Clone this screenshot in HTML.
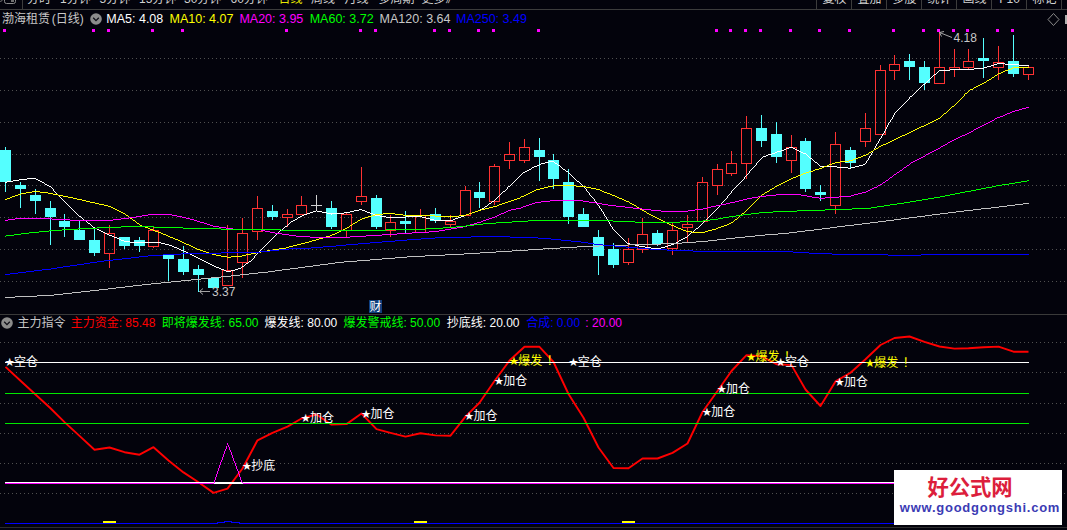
<!DOCTYPE html>
<html lang="zh"><head><meta charset="utf-8"><title>渤海租赁 (日线)</title>
<style>
html,body{margin:0;padding:0;background:#03030c;}
body{width:1067px;height:530px;overflow:hidden;position:relative;font-family:"Liberation Sans","Noto Sans CJK SC",sans-serif;}
svg{position:absolute;left:0;top:0;display:block}
text{font-family:"Liberation Sans","Noto Sans CJK SC",sans-serif;font-size:12px;}
.t{position:absolute;white-space:nowrap;font-size:12px;line-height:14px;color:#c8c8c8;font-weight:400}
.st{font-family:"DejaVu Sans",sans-serif;font-weight:400}
</style></head><body>
<svg width="1067" height="530" viewBox="0 0 1067 530">
<rect width="1067" height="530" fill="#03030c"/>
<g stroke="#505050" stroke-width="1" stroke-dasharray="1 3" shape-rendering="crispEdges">
<line x1="0" y1="58.5" x2="1067" y2="58.5"/>
<line x1="0" y1="90.5" x2="1067" y2="90.5"/>
<line x1="0" y1="122.5" x2="1067" y2="122.5"/>
<line x1="0" y1="154.5" x2="1067" y2="154.5"/>
<line x1="0" y1="185.5" x2="1067" y2="185.5"/>
<line x1="0" y1="217.5" x2="1067" y2="217.5"/>
<line x1="0" y1="249.5" x2="1067" y2="249.5"/>
<line x1="0" y1="281.5" x2="1067" y2="281.5"/>
<line x1="0" y1="342.5" x2="1067" y2="342.5"/>
<line x1="0" y1="372.5" x2="1067" y2="372.5"/>
<line x1="0" y1="403.5" x2="1067" y2="403.5"/>
<line x1="0" y1="433.5" x2="1067" y2="433.5"/>
<line x1="0" y1="463.5" x2="1067" y2="463.5"/>
<line x1="0" y1="493.5" x2="1067" y2="493.5"/>
</g>
<g shape-rendering="crispEdges">
<rect x="0" y="9" width="1067" height="1" fill="#3c3c3c"/>
<rect x="22" y="0" width="1" height="9" fill="#3c3c3c"/>
<rect x="816" y="0" width="1" height="9" fill="#3c3c3c"/>
<rect x="851" y="0" width="1" height="9" fill="#3c3c3c"/>
<rect x="886" y="0" width="1" height="9" fill="#3c3c3c"/>
<rect x="921" y="0" width="1" height="9" fill="#3c3c3c"/>
<rect x="956" y="0" width="1" height="9" fill="#3c3c3c"/>
<rect x="991" y="0" width="1" height="9" fill="#3c3c3c"/>
<rect x="1026" y="0" width="1" height="9" fill="#3c3c3c"/>
<rect x="1061" y="0" width="1" height="9" fill="#3c3c3c"/>
<rect x="0" y="314" width="1067" height="1" fill="#3a3a3a"/>
<rect x="0" y="527" width="1067" height="1" fill="#2c2c2e"/>
<rect x="1065" y="15" width="2" height="9" fill="#b0b0b0"/>
<rect x="3" y="29" width="3" height="3" fill="#ff00ff"/>
<rect x="92" y="29" width="3" height="3" fill="#ff00ff"/>
<rect x="107" y="29" width="3" height="3" fill="#ff00ff"/>
<rect x="151" y="29" width="3" height="3" fill="#ff00ff"/>
<rect x="181" y="29" width="3" height="3" fill="#ff00ff"/>
<rect x="285" y="29" width="3" height="3" fill="#ff00ff"/>
<rect x="359" y="29" width="3" height="3" fill="#ff00ff"/>
<rect x="374" y="29" width="3" height="3" fill="#ff00ff"/>
<rect x="433" y="29" width="3" height="3" fill="#ff00ff"/>
<rect x="448" y="29" width="3" height="3" fill="#ff00ff"/>
<rect x="477" y="29" width="3" height="3" fill="#ff00ff"/>
<rect x="492" y="29" width="3" height="3" fill="#ff00ff"/>
<rect x="537" y="29" width="3" height="3" fill="#ff00ff"/>
<rect x="715" y="29" width="3" height="3" fill="#ff00ff"/>
<rect x="729" y="29" width="3" height="3" fill="#ff00ff"/>
<rect x="744" y="29" width="3" height="3" fill="#ff00ff"/>
<rect x="759" y="29" width="3" height="3" fill="#ff00ff"/>
<rect x="789" y="29" width="3" height="3" fill="#ff00ff"/>
<rect x="818" y="29" width="3" height="3" fill="#ff00ff"/>
<rect x="848" y="29" width="3" height="3" fill="#ff00ff"/>
<rect x="892" y="29" width="3" height="3" fill="#ff00ff"/>
<rect x="922" y="29" width="3" height="3" fill="#ff00ff"/>
<rect x="937" y="29" width="3" height="3" fill="#ff00ff"/>
<rect x="952" y="29" width="3" height="3" fill="#ff00ff"/>
<rect x="966" y="29" width="3" height="3" fill="#ff00ff"/>
<rect x="996" y="29" width="3" height="3" fill="#ff00ff"/>
<rect x="1011" y="29" width="3" height="3" fill="#ff00ff"/>
</g>
<path d="M1053.5 13.5 L1059 19.5 L1053.5 25.5 L1048 19.5 Z" fill="none" stroke="#8a8a8a" stroke-width="1"/>
<g shape-rendering="crispEdges">
<rect x="5" y="147" width="1" height="45" fill="#54ffff"/>
<rect x="0" y="150" width="11" height="32" fill="#54ffff"/>
<rect x="20" y="182" width="1" height="26" fill="#54ffff"/>
<rect x="15" y="185" width="11" height="4" fill="#54ffff"/>
<rect x="35" y="189" width="1" height="25" fill="#54ffff"/>
<rect x="30" y="195" width="11" height="6" fill="#54ffff"/>
<rect x="50" y="201" width="1" height="44" fill="#54ffff"/>
<rect x="45" y="208" width="11" height="9" fill="#54ffff"/>
<rect x="64" y="214" width="1" height="23" fill="#54ffff"/>
<rect x="59" y="221" width="11" height="6" fill="#54ffff"/>
<rect x="79" y="221" width="1" height="19" fill="#54ffff"/>
<rect x="74" y="230" width="11" height="10" fill="#54ffff"/>
<rect x="94" y="227" width="1" height="29" fill="#54ffff"/>
<rect x="89" y="240" width="11" height="13" fill="#54ffff"/>
<rect x="109" y="225" width="1" height="8" fill="#ff3232"/>
<rect x="109" y="254" width="1" height="14" fill="#ff3232"/>
<rect x="104.5" y="233.5" width="10" height="20" fill="none" stroke="#ff3232" stroke-width="1"/>
<rect x="124" y="237" width="1" height="12" fill="#54ffff"/>
<rect x="119" y="237" width="11" height="9" fill="#54ffff"/>
<rect x="139" y="237" width="1" height="15" fill="#54ffff"/>
<rect x="134" y="240" width="11" height="6" fill="#54ffff"/>
<rect x="153" y="227" width="1" height="3" fill="#ff3232"/>
<rect x="153" y="247" width="1" height="1" fill="#ff3232"/>
<rect x="148.5" y="230.5" width="10" height="16" fill="none" stroke="#ff3232" stroke-width="1"/>
<rect x="168" y="254" width="1" height="27" fill="#54ffff"/>
<rect x="163" y="254" width="11" height="5" fill="#54ffff"/>
<rect x="183" y="246" width="1" height="29" fill="#54ffff"/>
<rect x="178" y="259" width="11" height="13" fill="#54ffff"/>
<rect x="198" y="265" width="1" height="27" fill="#54ffff"/>
<rect x="193" y="269" width="11" height="6" fill="#54ffff"/>
<rect x="213" y="278" width="1" height="10" fill="#54ffff"/>
<rect x="208" y="278" width="11" height="10" fill="#54ffff"/>
<rect x="227" y="225" width="1" height="45" fill="#ff3232"/>
<rect x="222.5" y="270.5" width="10" height="15" fill="none" stroke="#ff3232" stroke-width="1"/>
<rect x="242" y="218" width="1" height="15" fill="#ff3232"/>
<rect x="242" y="263" width="1" height="15" fill="#ff3232"/>
<rect x="237.5" y="233.5" width="10" height="29" fill="none" stroke="#ff3232" stroke-width="1"/>
<rect x="257" y="196" width="1" height="12" fill="#ff3232"/>
<rect x="257" y="232" width="1" height="8" fill="#ff3232"/>
<rect x="252.5" y="208.5" width="10" height="23" fill="none" stroke="#ff3232" stroke-width="1"/>
<rect x="272" y="205" width="1" height="15" fill="#54ffff"/>
<rect x="267" y="211" width="11" height="6" fill="#54ffff"/>
<rect x="287" y="209" width="1" height="5" fill="#ff3232"/>
<rect x="287" y="218" width="1" height="9" fill="#ff3232"/>
<rect x="282.5" y="214.5" width="10" height="3" fill="none" stroke="#ff3232" stroke-width="1"/>
<rect x="301" y="196" width="1" height="9" fill="#ff3232"/>
<rect x="296.5" y="205.5" width="10" height="9" fill="none" stroke="#ff3232" stroke-width="1"/>
<rect x="316" y="195" width="1" height="15" fill="#d0d0d0"/>
<rect x="311" y="205" width="11" height="1" fill="#d0d0d0"/>
<rect x="331" y="201" width="1" height="28" fill="#54ffff"/>
<rect x="326" y="208" width="11" height="19" fill="#54ffff"/>
<rect x="346" y="213" width="1" height="1" fill="#ff3232"/>
<rect x="346" y="231" width="1" height="6" fill="#ff3232"/>
<rect x="341.5" y="214.5" width="10" height="16" fill="none" stroke="#ff3232" stroke-width="1"/>
<rect x="361" y="167" width="1" height="29" fill="#ff3232"/>
<rect x="361" y="202" width="1" height="3" fill="#ff3232"/>
<rect x="356.5" y="196.5" width="10" height="5" fill="none" stroke="#ff3232" stroke-width="1"/>
<rect x="376" y="195" width="1" height="34" fill="#54ffff"/>
<rect x="371" y="198" width="11" height="29" fill="#54ffff"/>
<rect x="390" y="215" width="1" height="7" fill="#ff3232"/>
<rect x="390" y="231" width="1" height="6" fill="#ff3232"/>
<rect x="385.5" y="222.5" width="10" height="8" fill="none" stroke="#ff3232" stroke-width="1"/>
<rect x="405" y="211" width="1" height="22" fill="#54ffff"/>
<rect x="400" y="221" width="11" height="3" fill="#54ffff"/>
<rect x="420" y="209" width="1" height="6" fill="#ff3232"/>
<rect x="415.5" y="215.5" width="10" height="17" fill="none" stroke="#ff3232" stroke-width="1"/>
<rect x="435" y="208" width="1" height="15" fill="#54ffff"/>
<rect x="430" y="214" width="11" height="7" fill="#54ffff"/>
<rect x="450" y="215" width="1" height="6" fill="#ff3232"/>
<rect x="450" y="225" width="1" height="2" fill="#ff3232"/>
<rect x="445.5" y="221.5" width="10" height="3" fill="none" stroke="#ff3232" stroke-width="1"/>
<rect x="465" y="186" width="1" height="4" fill="#ff3232"/>
<rect x="460.5" y="190.5" width="10" height="25" fill="none" stroke="#ff3232" stroke-width="1"/>
<rect x="479" y="182" width="1" height="26" fill="#54ffff"/>
<rect x="474" y="192" width="11" height="6" fill="#54ffff"/>
<rect x="494" y="164" width="1" height="2" fill="#ff3232"/>
<rect x="494" y="202" width="1" height="3" fill="#ff3232"/>
<rect x="489.5" y="166.5" width="10" height="35" fill="none" stroke="#ff3232" stroke-width="1"/>
<rect x="509" y="142" width="1" height="12" fill="#ff3232"/>
<rect x="509" y="161" width="1" height="8" fill="#ff3232"/>
<rect x="504.5" y="154.5" width="10" height="6" fill="none" stroke="#ff3232" stroke-width="1"/>
<rect x="524" y="139" width="1" height="8" fill="#ff3232"/>
<rect x="524" y="161" width="1" height="2" fill="#ff3232"/>
<rect x="519.5" y="147.5" width="10" height="13" fill="none" stroke="#ff3232" stroke-width="1"/>
<rect x="539" y="138" width="1" height="43" fill="#54ffff"/>
<rect x="534" y="150" width="11" height="7" fill="#54ffff"/>
<rect x="553" y="154" width="1" height="35" fill="#54ffff"/>
<rect x="548" y="160" width="11" height="19" fill="#54ffff"/>
<rect x="568" y="169" width="1" height="55" fill="#54ffff"/>
<rect x="563" y="182" width="11" height="35" fill="#54ffff"/>
<rect x="583" y="208" width="1" height="19" fill="#54ffff"/>
<rect x="578" y="214" width="11" height="13" fill="#54ffff"/>
<rect x="598" y="230" width="1" height="45" fill="#54ffff"/>
<rect x="593" y="237" width="11" height="19" fill="#54ffff"/>
<rect x="613" y="243" width="1" height="25" fill="#54ffff"/>
<rect x="608" y="249" width="11" height="16" fill="#54ffff"/>
<rect x="628" y="238" width="1" height="11" fill="#ff3232"/>
<rect x="628" y="263" width="1" height="2" fill="#ff3232"/>
<rect x="623.5" y="249.5" width="10" height="13" fill="none" stroke="#ff3232" stroke-width="1"/>
<rect x="642" y="218" width="1" height="16" fill="#ff3232"/>
<rect x="642" y="250" width="1" height="3" fill="#ff3232"/>
<rect x="637.5" y="234.5" width="10" height="15" fill="none" stroke="#ff3232" stroke-width="1"/>
<rect x="657" y="230" width="1" height="16" fill="#54ffff"/>
<rect x="652" y="233" width="11" height="11" fill="#54ffff"/>
<rect x="672" y="223" width="1" height="7" fill="#ff3232"/>
<rect x="672" y="249" width="1" height="6" fill="#ff3232"/>
<rect x="667.5" y="230.5" width="10" height="18" fill="none" stroke="#ff3232" stroke-width="1"/>
<rect x="687" y="215" width="1" height="9" fill="#ff3232"/>
<rect x="687" y="228" width="1" height="14" fill="#ff3232"/>
<rect x="682.5" y="224.5" width="10" height="3" fill="none" stroke="#ff3232" stroke-width="1"/>
<rect x="702" y="177" width="1" height="5" fill="#ff3232"/>
<rect x="697.5" y="182.5" width="10" height="39" fill="none" stroke="#ff3232" stroke-width="1"/>
<rect x="717" y="164" width="1" height="5" fill="#ff3232"/>
<rect x="717" y="186" width="1" height="9" fill="#ff3232"/>
<rect x="712.5" y="169.5" width="10" height="16" fill="none" stroke="#ff3232" stroke-width="1"/>
<rect x="731" y="151" width="1" height="12" fill="#ff3232"/>
<rect x="731" y="174" width="1" height="2" fill="#ff3232"/>
<rect x="726.5" y="163.5" width="10" height="10" fill="none" stroke="#ff3232" stroke-width="1"/>
<rect x="746" y="116" width="1" height="12" fill="#ff3232"/>
<rect x="746" y="164" width="1" height="15" fill="#ff3232"/>
<rect x="741.5" y="128.5" width="10" height="35" fill="none" stroke="#ff3232" stroke-width="1"/>
<rect x="761" y="115" width="1" height="32" fill="#54ffff"/>
<rect x="756" y="128" width="11" height="13" fill="#54ffff"/>
<rect x="776" y="122" width="1" height="41" fill="#54ffff"/>
<rect x="771" y="134" width="11" height="23" fill="#54ffff"/>
<rect x="791" y="135" width="1" height="12" fill="#ff3232"/>
<rect x="791" y="161" width="1" height="12" fill="#ff3232"/>
<rect x="786.5" y="147.5" width="10" height="13" fill="none" stroke="#ff3232" stroke-width="1"/>
<rect x="805" y="138" width="1" height="54" fill="#54ffff"/>
<rect x="800" y="141" width="11" height="48" fill="#54ffff"/>
<rect x="820" y="185" width="1" height="16" fill="#54ffff"/>
<rect x="815" y="192" width="11" height="3" fill="#54ffff"/>
<rect x="835" y="132" width="1" height="12" fill="#ff3232"/>
<rect x="835" y="206" width="1" height="8" fill="#ff3232"/>
<rect x="830.5" y="144.5" width="10" height="61" fill="none" stroke="#ff3232" stroke-width="1"/>
<rect x="850" y="147" width="1" height="22" fill="#54ffff"/>
<rect x="845" y="150" width="11" height="13" fill="#54ffff"/>
<rect x="865" y="113" width="1" height="15" fill="#ff3232"/>
<rect x="865" y="142" width="1" height="5" fill="#ff3232"/>
<rect x="860.5" y="128.5" width="10" height="13" fill="none" stroke="#ff3232" stroke-width="1"/>
<rect x="880" y="65" width="1" height="5" fill="#ff3232"/>
<rect x="875.5" y="70.5" width="10" height="64" fill="none" stroke="#ff3232" stroke-width="1"/>
<rect x="894" y="55" width="1" height="9" fill="#ff3232"/>
<rect x="894" y="71" width="1" height="9" fill="#ff3232"/>
<rect x="889.5" y="64.5" width="10" height="6" fill="none" stroke="#ff3232" stroke-width="1"/>
<rect x="909" y="54" width="1" height="26" fill="#54ffff"/>
<rect x="904" y="61" width="11" height="6" fill="#54ffff"/>
<rect x="924" y="61" width="1" height="29" fill="#54ffff"/>
<rect x="919" y="67" width="11" height="16" fill="#54ffff"/>
<rect x="939" y="32" width="1" height="35" fill="#ff3232"/>
<rect x="934.5" y="67.5" width="10" height="16" fill="none" stroke="#ff3232" stroke-width="1"/>
<rect x="954" y="49" width="1" height="18" fill="#ff3232"/>
<rect x="954" y="70" width="1" height="7" fill="#ff3232"/>
<rect x="949.5" y="67.5" width="10" height="2" fill="none" stroke="#ff3232" stroke-width="1"/>
<rect x="968" y="49" width="1" height="12" fill="#ff3232"/>
<rect x="968" y="68" width="1" height="2" fill="#ff3232"/>
<rect x="963.5" y="61.5" width="10" height="6" fill="none" stroke="#ff3232" stroke-width="1"/>
<rect x="983" y="38" width="1" height="40" fill="#54ffff"/>
<rect x="978" y="58" width="11" height="3" fill="#54ffff"/>
<rect x="998" y="46" width="1" height="16" fill="#ff3232"/>
<rect x="998" y="68" width="1" height="12" fill="#ff3232"/>
<rect x="993.5" y="62.5" width="10" height="5" fill="none" stroke="#ff3232" stroke-width="1"/>
<rect x="1013" y="35" width="1" height="42" fill="#54ffff"/>
<rect x="1008" y="61" width="11" height="13" fill="#54ffff"/>
<rect x="1028" y="65" width="1" height="2" fill="#ff3232"/>
<rect x="1028" y="75" width="1" height="5" fill="#ff3232"/>
<rect x="1023.5" y="67.5" width="10" height="7" fill="none" stroke="#ff3232" stroke-width="1"/>
</g>
<g fill="none" stroke-width="1" shape-rendering="crispEdges">
<path stroke="#ffffff" d="M997 63.5h8M994 64.5h3M1005 64.5h14M991 65.5h3M1019 65.5h10M987 66.5h4M984 67.5h3M974 68.5h10M950 69.5h24M939 70.5h11M938 71.5h1M937 72.5h1M936 73.5h1M934 74.5h2M933 75.5h1M932 76.5h1M931 77.5h1M930 78.5h1M929 79.5h1M928 80.5h1M927 81.5h1M926 82.5h1M925 83.5h1M923 84.5h2M922 85.5h1M921 86.5h1M920 87.5h1M919 88.5h1M918 89.5h1M917 90.5h1M916 91.5h1M915 92.5h1M914 93.5h1M913 94.5h1M912 95.5h1M910 96.5h2M909 97.5h1M909 98.5h1M908 99.5h1M907 100.5h1M906 101.5h1M905 102.5h1M904 103.5h1M903 104.5h1M902 105.5h1M901 106.5h1M900 107.5h1M899 108.5h1M898 109.5h1M897 110.5h1M896 111.5h1M895 112.5h1M894 113.5h1M894 114.5h1M893 115.5h1M893 116.5h1M892 117.5h1M892 118.5h1M891 119.5h1M890 120.5h1M890 121.5h1M889 122.5h1M888 123.5h1M888 124.5h1M887 125.5h1M887 126.5h1M886 127.5h1M886 128.5h1M885 129.5h1M885 130.5h1M884 131.5h1M884 132.5h1M883 133.5h1M882 134.5h1M882 135.5h1M881 136.5h1M881 137.5h1M880 138.5h1M879 139.5h1M879 140.5h1M878 141.5h1M878 142.5h1M877 143.5h1M876 144.5h1M876 145.5h1M875 146.5h1M789 147.5h4M875 147.5h1M786 148.5h3M793 148.5h2M874 148.5h1M784 149.5h2M795 149.5h2M874 149.5h1M781 150.5h3M797 150.5h2M873 150.5h1M777 151.5h4M799 151.5h2M872 151.5h1M775 152.5h2M801 152.5h2M872 152.5h1M772 153.5h3M803 153.5h3M871 153.5h1M768 154.5h4M806 154.5h1M871 154.5h1M766 155.5h2M807 155.5h1M870 155.5h1M763 156.5h3M808 156.5h1M869 156.5h1M762 157.5h1M809 157.5h1M869 157.5h1M761 158.5h1M810 158.5h2M868 158.5h1M760 159.5h1M812 159.5h1M868 159.5h1M759 160.5h1M813 160.5h1M867 160.5h1M549 161.5h5M758 161.5h1M814 161.5h1M866 161.5h1M545 162.5h4M554 162.5h1M757 162.5h1M815 162.5h2M866 162.5h1M541 163.5h4M555 163.5h2M756 163.5h1M817 163.5h1M865 163.5h1M539 164.5h2M557 164.5h1M756 164.5h1M818 164.5h1M863 164.5h2M537 165.5h2M558 165.5h2M755 165.5h1M819 165.5h1M859 165.5h4M534 166.5h3M560 166.5h1M754 166.5h1M820 166.5h17M855 166.5h4M532 167.5h2M561 167.5h1M753 167.5h1M837 167.5h11M851 167.5h4M531 168.5h1M562 168.5h1M752 168.5h1M848 168.5h3M529 169.5h2M563 169.5h2M751 169.5h1M527 170.5h2M565 170.5h1M750 170.5h1M525 171.5h2M566 171.5h2M749 171.5h1M523 172.5h2M568 172.5h1M749 172.5h1M522 173.5h1M569 173.5h1M748 173.5h1M521 174.5h1M570 174.5h1M747 174.5h1M520 175.5h1M571 175.5h1M746 175.5h1M519 176.5h1M572 176.5h1M745 176.5h1M518 177.5h1M573 177.5h1M744 177.5h1M27 178.5h9M517 178.5h1M574 178.5h1M744 178.5h1M19 179.5h8M36 179.5h2M516 179.5h1M575 179.5h1M743 179.5h1M13 180.5h6M38 180.5h2M515 180.5h1M576 180.5h1M742 180.5h1M7 181.5h6M40 181.5h2M514 181.5h1M577 181.5h2M741 181.5h1M5 182.5h2M42 182.5h2M513 182.5h1M579 182.5h1M740 182.5h1M44 183.5h1M512 183.5h1M580 183.5h1M739 183.5h1M45 184.5h2M511 184.5h1M581 184.5h1M738 184.5h1M47 185.5h2M510 185.5h1M582 185.5h1M737 185.5h1M49 186.5h2M508 186.5h2M583 186.5h1M736 186.5h1M51 187.5h1M507 187.5h1M584 187.5h1M735 187.5h1M52 188.5h1M507 188.5h1M585 188.5h1M734 188.5h1M53 189.5h1M506 189.5h1M586 189.5h1M733 189.5h1M53 190.5h1M505 190.5h1M586 190.5h1M732 190.5h1M54 191.5h1M503 191.5h2M587 191.5h1M731 191.5h1M55 192.5h1M502 192.5h1M588 192.5h1M731 192.5h1M56 193.5h1M501 193.5h1M589 193.5h1M730 193.5h1M57 194.5h1M500 194.5h1M589 194.5h1M729 194.5h1M58 195.5h1M499 195.5h1M590 195.5h1M728 195.5h1M59 196.5h1M498 196.5h1M591 196.5h1M727 196.5h1M60 197.5h1M497 197.5h1M592 197.5h1M727 197.5h1M61 198.5h1M496 198.5h1M593 198.5h1M726 198.5h1M62 199.5h1M495 199.5h1M594 199.5h1M725 199.5h1M63 200.5h1M494 200.5h1M594 200.5h1M724 200.5h1M64 201.5h1M492 201.5h2M595 201.5h1M723 201.5h1M65 202.5h1M491 202.5h1M596 202.5h1M722 202.5h1M66 203.5h1M489 203.5h2M597 203.5h1M721 203.5h1M67 204.5h1M488 204.5h1M597 204.5h1M721 204.5h1M68 205.5h1M487 205.5h1M598 205.5h1M720 205.5h1M69 206.5h1M485 206.5h2M599 206.5h1M719 206.5h1M70 207.5h1M484 207.5h1M599 207.5h1M718 207.5h1M71 208.5h1M482 208.5h2M600 208.5h1M717 208.5h1M72 209.5h1M359 209.5h3M480 209.5h2M601 209.5h1M716 209.5h1M73 210.5h1M316 210.5h1M354 210.5h5M362 210.5h3M478 210.5h2M601 210.5h1M715 210.5h1M74 211.5h1M313 211.5h3M317 211.5h5M350 211.5h4M365 211.5h2M475 211.5h3M602 211.5h1M714 211.5h1M75 212.5h1M310 212.5h3M322 212.5h5M344 212.5h6M367 212.5h3M472 212.5h3M603 212.5h1M713 212.5h1M76 213.5h1M307 213.5h3M327 213.5h17M370 213.5h3M469 213.5h3M603 213.5h1M712 213.5h1M77 214.5h1M304 214.5h3M331 214.5h1M373 214.5h2M466 214.5h3M604 214.5h1M711 214.5h1M78 215.5h1M302 215.5h2M375 215.5h5M464 215.5h2M604 215.5h1M710 215.5h1M79 216.5h2M300 216.5h2M380 216.5h6M406 216.5h16M461 216.5h3M605 216.5h1M709 216.5h1M81 217.5h1M298 217.5h2M386 217.5h20M422 217.5h4M458 217.5h3M606 217.5h1M708 217.5h1M82 218.5h1M297 218.5h1M426 218.5h4M455 218.5h3M606 218.5h1M707 218.5h1M83 219.5h1M295 219.5h2M430 219.5h4M453 219.5h2M607 219.5h1M706 219.5h1M84 220.5h2M293 220.5h2M434 220.5h19M607 220.5h1M705 220.5h1M86 221.5h1M291 221.5h2M608 221.5h1M704 221.5h1M87 222.5h1M290 222.5h1M609 222.5h1M703 222.5h1M88 223.5h2M289 223.5h1M609 223.5h1M702 223.5h1M90 224.5h1M288 224.5h1M610 224.5h1M701 224.5h1M91 225.5h1M287 225.5h1M610 225.5h1M700 225.5h1M92 226.5h1M285 226.5h2M611 226.5h1M699 226.5h1M93 227.5h2M284 227.5h1M612 227.5h1M698 227.5h1M95 228.5h2M283 228.5h1M612 228.5h1M696 228.5h2M97 229.5h2M282 229.5h1M613 229.5h1M695 229.5h1M99 230.5h2M280 230.5h2M614 230.5h1M694 230.5h1M101 231.5h2M279 231.5h1M615 231.5h1M693 231.5h1M103 232.5h2M278 232.5h1M616 232.5h1M691 232.5h2M105 233.5h2M277 233.5h1M617 233.5h1M690 233.5h1M107 234.5h2M276 234.5h1M618 234.5h1M689 234.5h1M109 235.5h3M275 235.5h1M619 235.5h1M688 235.5h1M112 236.5h2M274 236.5h1M620 236.5h1M687 236.5h1M114 237.5h3M273 237.5h1M621 237.5h1M685 237.5h2M117 238.5h2M272 238.5h1M622 238.5h1M683 238.5h2M119 239.5h2M271 239.5h1M623 239.5h1M681 239.5h2M121 240.5h3M270 240.5h1M624 240.5h1M679 240.5h2M124 241.5h6M269 241.5h1M625 241.5h1M678 241.5h1M130 242.5h31M268 242.5h1M626 242.5h1M676 242.5h2M161 243.5h4M267 243.5h1M627 243.5h3M674 243.5h2M165 244.5h4M266 244.5h1M630 244.5h5M671 244.5h3M169 245.5h3M265 245.5h1M635 245.5h4M668 245.5h3M172 246.5h2M264 246.5h1M639 246.5h6M665 246.5h3M174 247.5h3M263 247.5h1M645 247.5h6M661 247.5h4M177 248.5h2M262 248.5h1M651 248.5h10M179 249.5h2M261 249.5h1M657 249.5h1M181 250.5h3M260 250.5h1M184 251.5h2M259 251.5h1M186 252.5h2M258 252.5h1M188 253.5h2M257 253.5h1M190 254.5h2M256 254.5h1M192 255.5h2M255 255.5h1M194 256.5h2M254 256.5h1M196 257.5h2M254 257.5h1M198 258.5h2M253 258.5h1M200 259.5h2M252 259.5h1M202 260.5h2M251 260.5h1M204 261.5h2M249 261.5h2M206 262.5h2M248 262.5h1M208 263.5h2M246 263.5h2M210 264.5h2M245 264.5h1M212 265.5h2M244 265.5h1M214 266.5h2M242 266.5h2M216 267.5h3M241 267.5h1M219 268.5h2M238 268.5h3M221 269.5h3M235 269.5h3M224 270.5h2M231 270.5h4M226 271.5h5"/>
<path stroke="#ffff00" d="M1013 67.5h16M1011 68.5h2M1008 69.5h3M1005 70.5h3M1003 71.5h2M1001 72.5h2M998 73.5h3M997 74.5h1M995 75.5h2M994 76.5h1M992 77.5h2M991 78.5h1M989 79.5h2M987 80.5h2M986 81.5h1M984 82.5h2M982 83.5h2M980 84.5h2M978 85.5h2M976 86.5h2M974 87.5h2M973 88.5h1M970 89.5h3M969 90.5h1M968 91.5h1M967 92.5h1M965 93.5h2M964 94.5h1M964 95.5h1M963 96.5h1M962 97.5h1M961 98.5h1M960 99.5h1M959 100.5h1M958 101.5h1M957 102.5h1M956 103.5h1M955 104.5h1M954 105.5h1M952 106.5h2M951 107.5h1M950 108.5h1M949 109.5h1M948 110.5h1M947 111.5h1M946 112.5h1M944 113.5h2M943 114.5h1M942 115.5h1M941 116.5h1M940 117.5h1M938 118.5h2M936 119.5h2M934 120.5h2M932 121.5h2M930 122.5h2M928 123.5h2M926 124.5h2M924 125.5h2M921 126.5h3M919 127.5h2M917 128.5h2M915 129.5h2M913 130.5h2M911 131.5h2M909 132.5h2M907 133.5h2M905 134.5h2M902 135.5h3M900 136.5h2M898 137.5h2M896 138.5h2M894 139.5h2M892 140.5h2M890 141.5h2M888 142.5h2M886 143.5h2M883 144.5h3M881 145.5h2M879 146.5h2M878 147.5h1M876 148.5h2M874 149.5h2M873 150.5h1M871 151.5h2M869 152.5h2M868 153.5h1M866 154.5h2M863 155.5h3M861 156.5h2M858 157.5h3M855 158.5h3M853 159.5h2M849 160.5h4M840 161.5h9M835 162.5h5M832 163.5h3M829 164.5h3M827 165.5h2M824 166.5h3M822 167.5h2M819 168.5h3M815 169.5h4M813 170.5h2M809 171.5h4M806 172.5h3M803 173.5h3M801 174.5h2M798 175.5h3M796 176.5h2M793 177.5h3M791 178.5h2M789 179.5h2M787 180.5h2M785 181.5h2M783 182.5h2M781 183.5h2M779 184.5h2M553 185.5h23M777 185.5h2M548 186.5h5M576 186.5h10M775 186.5h2M544 187.5h4M586 187.5h5M774 187.5h1M540 188.5h4M591 188.5h5M772 188.5h2M536 189.5h4M596 189.5h4M770 189.5h2M534 190.5h2M600 190.5h2M769 190.5h1M32 191.5h8M532 191.5h2M602 191.5h2M767 191.5h2M26 192.5h6M40 192.5h8M530 192.5h2M604 192.5h3M765 192.5h2M21 193.5h5M48 193.5h5M528 193.5h2M607 193.5h3M764 193.5h1M18 194.5h3M53 194.5h5M526 194.5h2M610 194.5h2M762 194.5h2M15 195.5h3M58 195.5h5M524 195.5h2M612 195.5h3M761 195.5h1M12 196.5h3M63 196.5h5M521 196.5h3M615 196.5h2M760 196.5h1M10 197.5h2M68 197.5h5M520 197.5h1M617 197.5h2M759 197.5h1M7 198.5h3M73 198.5h4M517 198.5h3M619 198.5h3M758 198.5h1M5 199.5h2M77 199.5h5M514 199.5h3M622 199.5h2M757 199.5h1M82 200.5h4M511 200.5h3M624 200.5h2M756 200.5h1M86 201.5h4M508 201.5h3M626 201.5h3M755 201.5h1M90 202.5h5M505 202.5h3M629 202.5h1M754 202.5h1M95 203.5h4M502 203.5h3M630 203.5h2M753 203.5h1M99 204.5h5M499 204.5h3M632 204.5h2M752 204.5h1M104 205.5h4M497 205.5h2M634 205.5h2M751 205.5h1M108 206.5h3M493 206.5h4M636 206.5h1M750 206.5h1M111 207.5h2M489 207.5h4M637 207.5h2M749 207.5h1M113 208.5h2M485 208.5h4M639 208.5h1M748 208.5h1M115 209.5h2M481 209.5h4M640 209.5h2M747 209.5h1M117 210.5h2M478 210.5h3M642 210.5h2M746 210.5h1M119 211.5h2M475 211.5h3M644 211.5h2M745 211.5h1M121 212.5h2M472 212.5h3M646 212.5h1M744 212.5h1M123 213.5h2M383 213.5h12M469 213.5h3M647 213.5h2M742 213.5h2M125 214.5h1M375 214.5h8M395 214.5h8M466 214.5h3M649 214.5h2M741 214.5h1M126 215.5h2M372 215.5h3M403 215.5h32M459 215.5h7M651 215.5h2M740 215.5h1M128 216.5h1M368 216.5h4M435 216.5h24M653 216.5h2M739 216.5h1M129 217.5h1M365 217.5h3M450 217.5h1M655 217.5h2M738 217.5h1M130 218.5h2M362 218.5h3M657 218.5h2M737 218.5h1M132 219.5h1M360 219.5h2M659 219.5h2M735 219.5h2M133 220.5h2M358 220.5h2M661 220.5h2M734 220.5h1M135 221.5h1M357 221.5h1M663 221.5h2M733 221.5h1M136 222.5h1M355 222.5h2M665 222.5h2M731 222.5h2M137 223.5h2M353 223.5h2M667 223.5h2M729 223.5h2M139 224.5h1M352 224.5h1M669 224.5h2M727 224.5h2M140 225.5h2M350 225.5h2M671 225.5h3M724 225.5h3M142 226.5h3M349 226.5h1M674 226.5h2M721 226.5h3M145 227.5h3M347 227.5h2M676 227.5h2M718 227.5h3M148 228.5h2M345 228.5h2M678 228.5h3M716 228.5h2M150 229.5h3M343 229.5h2M681 229.5h2M712 229.5h4M153 230.5h2M341 230.5h2M683 230.5h3M708 230.5h4M155 231.5h3M339 231.5h2M686 231.5h6M705 231.5h3M158 232.5h3M337 232.5h2M692 232.5h13M161 233.5h2M335 233.5h2M163 234.5h3M332 234.5h3M166 235.5h2M330 235.5h2M168 236.5h2M326 236.5h4M170 237.5h3M323 237.5h3M173 238.5h2M319 238.5h4M175 239.5h3M316 239.5h3M178 240.5h2M312 240.5h4M180 241.5h2M309 241.5h3M182 242.5h2M305 242.5h4M184 243.5h2M301 243.5h4M186 244.5h3M297 244.5h4M189 245.5h2M293 245.5h4M191 246.5h2M289 246.5h4M193 247.5h2M286 247.5h3M195 248.5h2M279 248.5h7M197 249.5h3M273 249.5h6M200 250.5h3M267 250.5h6M203 251.5h3M261 251.5h6M206 252.5h3M256 252.5h5M209 253.5h3M251 253.5h5M212 254.5h4M246 254.5h5M216 255.5h5M242 255.5h4M221 256.5h6M231 256.5h11M227 257.5h4"/>
<path stroke="#ff00ff" d="M1026 107.5h3M1022 108.5h4M1019 109.5h3M1015 110.5h4M1012 111.5h3M1010 112.5h2M1007 113.5h3M1005 114.5h2M1003 115.5h2M1000 116.5h3M997 117.5h3M995 118.5h2M994 119.5h1M992 120.5h2M990 121.5h2M988 122.5h2M986 123.5h2M984 124.5h2M982 125.5h2M980 126.5h2M978 127.5h2M976 128.5h2M974 129.5h2M973 130.5h1M971 131.5h2M969 132.5h2M967 133.5h2M965 134.5h2M962 135.5h3M960 136.5h2M958 137.5h2M956 138.5h2M954 139.5h2M952 140.5h2M950 141.5h2M948 142.5h2M947 143.5h1M945 144.5h2M943 145.5h2M941 146.5h2M940 147.5h1M938 148.5h2M936 149.5h2M934 150.5h2M932 151.5h2M930 152.5h2M928 153.5h2M926 154.5h2M925 155.5h1M923 156.5h2M921 157.5h2M919 158.5h2M917 159.5h2M915 160.5h2M913 161.5h2M911 162.5h2M910 163.5h1M909 164.5h1M907 165.5h2M906 166.5h1M904 167.5h2M903 168.5h1M902 169.5h1M900 170.5h2M899 171.5h1M897 172.5h2M896 173.5h1M894 174.5h2M893 175.5h1M892 176.5h1M890 177.5h2M889 178.5h1M888 179.5h1M886 180.5h2M885 181.5h1M883 182.5h2M882 183.5h1M880 184.5h2M878 185.5h2M877 186.5h1M874 187.5h3M872 188.5h2M870 189.5h2M868 190.5h2M866 191.5h2M862 192.5h4M858 193.5h4M776 194.5h25M854 194.5h4M766 195.5h10M801 195.5h6M851 195.5h3M758 196.5h8M807 196.5h5M839 196.5h12M752 197.5h6M812 197.5h7M825 197.5h14M747 198.5h5M819 198.5h6M743 199.5h4M550 200.5h33M739 200.5h4M541 201.5h9M583 201.5h6M735 201.5h4M535 202.5h6M589 202.5h7M730 202.5h5M532 203.5h3M596 203.5h6M726 203.5h4M529 204.5h3M602 204.5h6M721 204.5h5M526 205.5h3M608 205.5h8M716 205.5h5M523 206.5h3M616 206.5h9M711 206.5h5M521 207.5h2M625 207.5h8M707 207.5h4M516 208.5h5M633 208.5h9M703 208.5h4M511 209.5h5M642 209.5h9M695 209.5h8M508 210.5h3M651 210.5h10M688 210.5h7M506 211.5h2M661 211.5h27M504 212.5h2M501 213.5h3M148 214.5h24M499 214.5h2M142 215.5h6M172 215.5h5M497 215.5h2M136 216.5h6M177 216.5h5M495 216.5h2M129 217.5h7M182 217.5h4M492 217.5h3M15 218.5h37M121 218.5h8M186 218.5h4M489 218.5h3M8 219.5h7M52 219.5h18M113 219.5h8M190 219.5h4M486 219.5h3M5 220.5h3M70 220.5h43M194 220.5h3M483 220.5h3M197 221.5h3M481 221.5h2M200 222.5h4M477 222.5h4M204 223.5h3M474 223.5h3M207 224.5h3M470 224.5h4M210 225.5h3M467 225.5h3M213 226.5h6M463 226.5h4M219 227.5h7M457 227.5h6M226 228.5h7M451 228.5h6M233 229.5h28M445 229.5h6M261 230.5h4M439 230.5h6M265 231.5h5M429 231.5h10M270 232.5h5M412 232.5h17M275 233.5h7M397 233.5h15M282 234.5h7M382 234.5h15M289 235.5h7M366 235.5h16M296 236.5h14M350 236.5h16M310 237.5h40"/>
<path stroke="#00ff00" d="M1027 180.5h2M1021 181.5h6M1015 182.5h6M1009 183.5h6M1002 184.5h7M996 185.5h6M992 186.5h4M986 187.5h6M981 188.5h5M976 189.5h5M971 190.5h5M965 191.5h6M960 192.5h5M955 193.5h5M950 194.5h5M945 195.5h5M940 196.5h5M934 197.5h6M928 198.5h6M922 199.5h6M916 200.5h6M910 201.5h6M904 202.5h6M897 203.5h7M890 204.5h7M884 205.5h6M877 206.5h7M871 207.5h6M852 208.5h19M825 209.5h27M797 210.5h28M773 211.5h24M759 212.5h14M751 213.5h8M743 214.5h8M736 215.5h7M729 216.5h7M723 217.5h6M718 218.5h5M710 219.5h8M528 220.5h85M703 220.5h7M512 221.5h16M613 221.5h22M680 221.5h23M496 222.5h16M635 222.5h45M483 223.5h13M474 224.5h9M466 225.5h8M121 226.5h33M456 226.5h10M97 227.5h24M154 227.5h29M443 227.5h13M78 228.5h19M183 228.5h38M426 228.5h17M62 229.5h16M221 229.5h60M386 229.5h40M49 230.5h13M281 230.5h105M39 231.5h10M29 232.5h10M21 233.5h8M14 234.5h7M6 235.5h8M5 236.5h1"/>
<path stroke="#c0c0c0" d="M1023 203.5h6M1015 204.5h8M1007 205.5h8M999 206.5h8M991 207.5h8M981 208.5h10M973 209.5h8M964 210.5h9M956 211.5h8M948 212.5h8M940 213.5h8M932 214.5h8M925 215.5h7M917 216.5h8M909 217.5h8M901 218.5h8M894 219.5h7M886 220.5h8M878 221.5h8M870 222.5h8M862 223.5h8M854 224.5h8M845 225.5h9M837 226.5h8M830 227.5h7M822 228.5h8M814 229.5h8M805 230.5h9M797 231.5h8M789 232.5h8M778 233.5h11M765 234.5h13M755 235.5h10M745 236.5h10M735 237.5h10M726 238.5h9M717 239.5h9M708 240.5h9M696 241.5h12M682 242.5h14M661 243.5h21M628 244.5h33M599 245.5h29M577 246.5h22M560 247.5h17M543 248.5h17M528 249.5h15M512 250.5h16M496 251.5h16M480 252.5h16M464 253.5h16M445 254.5h19M425 255.5h20M407 256.5h18M395 257.5h12M382 258.5h13M370 259.5h12M357 260.5h13M344 261.5h13M335 262.5h9M328 263.5h7M320 264.5h8M313 265.5h7M305 266.5h8M298 267.5h7M290 268.5h8M282 269.5h8M275 270.5h7M268 271.5h7M258 272.5h10M249 273.5h9M240 274.5h9M231 275.5h9M221 276.5h10M211 277.5h10M201 278.5h10M191 279.5h10M181 280.5h10M171 281.5h10M161 282.5h10M151 283.5h10M142 284.5h9M133 285.5h9M125 286.5h8M116 287.5h9M108 288.5h8M99 289.5h9M90 290.5h9M81 291.5h9M72 292.5h9M63 293.5h9M54 294.5h9M37 295.5h17M15 296.5h22M5 297.5h10"/>
<path stroke="#0000ff" d="M471 236.5h39M435 237.5h36M510 237.5h28M421 238.5h14M538 238.5h13M407 239.5h14M551 239.5h10M395 240.5h12M561 240.5h10M382 241.5h13M571 241.5h10M370 242.5h12M581 242.5h7M358 243.5h12M588 243.5h6M346 244.5h12M594 244.5h9M336 245.5h10M603 245.5h12M323 246.5h13M615 246.5h11M311 247.5h12M626 247.5h12M289 248.5h22M638 248.5h12M279 249.5h10M650 249.5h17M270 250.5h9M667 250.5h26M260 251.5h10M693 251.5h100M221 252.5h39M793 252.5h16M181 253.5h40M809 253.5h23M163 254.5h18M832 254.5h56M921 254.5h108M148 255.5h15M888 255.5h33M139 256.5h9M131 257.5h8M122 258.5h9M113 259.5h9M104 260.5h9M97 261.5h7M90 262.5h7M84 263.5h6M77 264.5h7M70 265.5h7M63 266.5h7M57 267.5h6M51 268.5h6M42 269.5h9M34 270.5h8M26 271.5h8M18 272.5h8M10 273.5h8M5 274.5h5"/>
</g>
<g stroke="#b4b4b4" stroke-width="0.9" fill="none"><path d="M199.5 291.5 H210 M203 288.5 L199.5 291.5 L203 294.5"/><path d="M939.5 32.5 L952 37.5 M944 31.5 L939.5 32.5 L941.5 36.5"/></g>
<text x="212" y="295.5" fill="#c8c8c8" font-size="12.5">3.37</text>
<text x="953.5" y="41.5" fill="#c8c8c8" font-size="12.5">4.18</text>
<polyline fill="none" stroke="#ff0000" stroke-width="1.9" stroke-linejoin="round" points="5.5,366.9 20.5,380.7 35.5,394.5 50.5,408.3 64.5,422.1 79.5,435.9 94.5,449.7 109.5,447.5 124.5,452.2 139.5,454.7 153.5,447.2 168.5,460.5 183.5,472.4 198.5,482.3 213.5,492.9 227.5,488.6 242.5,468.5 257.5,440.3 272.5,432.8 287.5,426.6 301.5,418.5 316.5,414.5 331.5,424.6 346.5,424.1 361.5,413.5 376.5,429.1 390.5,432.8 405.5,436.6 420.5,433.3 435.5,435.4 450.5,435.7 465.5,416.6 479.5,402.8 494.5,381.0 509.5,360.5 524.5,346.8 539.5,346.8 553.5,362.0 568.5,394.0 583.5,417.8 598.5,447.5 613.5,468.0 628.5,468.2 642.5,458.5 657.5,458.5 672.5,452.9 687.5,443.5 702.5,412.0 717.5,391.0 731.5,371.0 746.5,355.1 761.5,356.3 776.5,364.2 791.5,365.1 805.5,389.5 820.5,406.0 835.5,381.4 850.5,372.7 865.5,359.3 880.5,345.0 894.5,338.0 909.5,336.5 924.5,341.8 939.5,346.5 954.5,348.6 968.5,348.2 983.5,347.3 998.5,346.6 1013.5,351.7 1028.5,351.7"/>
<g shape-rendering="crispEdges">
<rect x="5" y="362" width="1024" height="1" fill="#ffffff"/>
<rect x="5" y="393" width="1024" height="1" fill="#00e800"/>
<rect x="5" y="423" width="1024" height="1" fill="#00e800"/>
</g>
<rect x="5" y="482" width="1024" height="2" fill="#ffffff" shape-rendering="crispEdges"/>
<path fill="none" stroke="#ff00ff" stroke-width="1" shape-rendering="crispEdges" d="M227 443.5h1M227 444.5h1M228 445.5h1M226 446.5h1M228 446.5h1M226 447.5h1M229 447.5h1M226 448.5h1M229 448.5h1M225 449.5h1M229 449.5h1M225 450.5h1M230 450.5h1M224 451.5h1M230 451.5h1M224 452.5h1M231 452.5h1M224 453.5h1M231 453.5h1M223 454.5h1M231 454.5h1M223 455.5h1M232 455.5h1M223 456.5h1M232 456.5h1M222 457.5h1M232 457.5h1M222 458.5h1M233 458.5h1M222 459.5h1M233 459.5h1M221 460.5h1M233 460.5h1M221 461.5h1M234 461.5h1M220 462.5h1M234 462.5h1M220 463.5h1M235 463.5h1M220 464.5h1M235 464.5h1M219 465.5h1M235 465.5h1M219 466.5h1M236 466.5h1M219 467.5h1M236 467.5h1M218 468.5h1M236 468.5h1M218 469.5h1M237 469.5h1M218 470.5h1M237 470.5h1M217 471.5h1M238 471.5h1M217 472.5h1M238 472.5h1M217 473.5h1M238 473.5h1M216 474.5h1M239 474.5h1M216 475.5h1M239 475.5h1M216 476.5h1M239 476.5h1M215 477.5h1M240 477.5h1M215 478.5h1M240 478.5h1M215 479.5h1M240 479.5h1M214 480.5h1M241 480.5h1M214 481.5h1M241 481.5h1M214 482.5h1M242 482.5h1M5 483.5h209M243 483.5h786"/>
<polyline fill="none" stroke="#0000ff" stroke-width="1" shape-rendering="crispEdges" points="5,523.5 217,523.5 217,522.5 224,522.5 224,521.5 231,521.5 231,522.5 239,522.5 239,523.5 1029,523.5"/>
<g shape-rendering="crispEdges">
<rect x="103" y="521" width="13" height="2" fill="#ffff00"/>
<rect x="414" y="521" width="13" height="2" fill="#ffff00"/>
<rect x="622" y="521" width="13" height="2" fill="#ffff00"/>
</g>
<rect x="894" y="470" width="168" height="55" fill="#ffffff"/>
</svg>
<div class="t" style="left:27px;top:-8px;color:#d0d0d0;">分时</div>
<div class="t" style="left:60px;top:-8px;color:#d0d0d0;">1分钟</div>
<div class="t" style="left:99.5px;top:-8px;color:#d0d0d0;">5分钟</div>
<div class="t" style="left:139px;top:-8px;color:#d0d0d0;">15分钟</div>
<div class="t" style="left:184px;top:-8px;color:#d0d0d0;">30分钟</div>
<div class="t" style="left:230.5px;top:-8px;color:#d0d0d0;">60分钟</div>
<div class="t" style="left:278.5px;top:-8px;color:#e8e800;">日线</div>
<div class="t" style="left:311px;top:-8px;color:#d0d0d0;">周线</div>
<div class="t" style="left:344.5px;top:-8px;color:#d0d0d0;">月线</div>
<div class="t" style="left:378.5px;top:-8px;color:#d0d0d0;">多周期</div>
<div class="t" style="left:421.5px;top:-8px;color:#d0d0d0;">更多》</div>
<div style="position:absolute;left:4px;top:-8px;width:10px;height:9.5px;border:1px solid #8c8c8c;border-radius:2.5px"></div>
<div style="position:absolute;left:11px;top:-1px;width:3px;height:2.5px;background:#707070"></div>
<div style="position:absolute;left:-3px;top:-4px;width:4px;height:4px;border:1px solid #707070;border-radius:3px"></div>
<div class="t" style="left:817px;top:-8px;width:35px;text-align:center;color:#d0d0d0">复权</div>
<div class="t" style="left:852px;top:-8px;width:35px;text-align:center;color:#d0d0d0">叠加</div>
<div class="t" style="left:887px;top:-8px;width:35px;text-align:center;color:#d0d0d0">多股</div>
<div class="t" style="left:922px;top:-8px;width:35px;text-align:center;color:#d0d0d0">统计</div>
<div class="t" style="left:957px;top:-8px;width:35px;text-align:center;color:#d0d0d0">画线</div>
<div class="t" style="left:992px;top:-8px;width:35px;text-align:center;color:#d0d0d0">F10</div>
<div class="t" style="left:1027px;top:-8px;width:35px;text-align:center;color:#d0d0d0">标记</div>
<div class="t" style="left:2px;top:11.5px;color:#c8c8c8;word-spacing:-1.5px;">渤海租赁 (日线)</div>
<svg style="left:90px;top:13px" width="12" height="12" viewBox="0 0 12 12"><circle cx="6" cy="6" r="5.8" fill="#8c8c8c"/><path d="M3.2 4.8 L6 7.6 L8.8 4.8" fill="none" stroke="#101018" stroke-width="1.3"/></svg>
<div class="t" style="left:106.3px;top:11.5px;color:#ffffff;font-size:12.5px;">MA5: 4.08</div>
<div class="t" style="left:169.5px;top:11.5px;color:#ffff00;font-size:12.5px;">MA10: 4.07</div>
<div class="t" style="left:239.4px;top:11.5px;color:#ff00ff;font-size:12.5px;">MA20: 3.95</div>
<div class="t" style="left:309.7px;top:11.5px;color:#00ff00;font-size:12.5px;">MA60: 3.72</div>
<div class="t" style="left:379.6px;top:11.5px;color:#c8c8c8;font-size:12.5px;">MA120: 3.64</div>
<div class="t" style="left:456px;top:11.5px;color:#0000ff;font-size:12.5px;">MA250: 3.49</div>
<div class="t" style="left:369px;top:300px;width:13px;height:13px;line-height:15px;overflow:hidden;background:#0f3f7c;color:#fff;text-align:center;font-size:12px">财</div>
<svg style="left:1px;top:317px" width="12" height="12" viewBox="0 0 12 12"><circle cx="6" cy="6" r="5.8" fill="#8c8c8c"/><path d="M3.2 4.8 L6 7.6 L8.8 4.8" fill="none" stroke="#101018" stroke-width="1.3"/></svg>
<div class="t" style="left:17.4px;top:315.5px;color:#c8c8c8;font-size:12px;">主力指令</div>
<div class="t" style="left:70.7px;top:315.5px;color:#ff0000;font-size:12px;">主力资金: 85.48</div>
<div class="t" style="left:161.8px;top:315.5px;color:#00ff00;font-size:12px;">即将爆发线: 65.00</div>
<div class="t" style="left:264.6px;top:315.5px;color:#ffffff;font-size:12px;">爆发线: 80.00</div>
<div class="t" style="left:343.4px;top:315.5px;color:#00ff00;font-size:12px;">爆发警戒线: 50.00</div>
<div class="t" style="left:446.8px;top:315.5px;color:#ffffff;font-size:12px;">抄底线: 20.00</div>
<div class="t" style="left:526.2px;top:315.5px;color:#0000ff;font-size:12px;">合成: 0.00</div>
<div class="t" style="left:585.3px;top:315.5px;color:#ff00ff;font-size:12px;">: 20.00</div>
<div class="t" style="left:4.5px;top:355px;color:#fff;"><span class="st" style="font-size:11.5px;margin-right:-0.8px">★</span>空仓</div>
<div class="t" style="left:241.7px;top:458.5px;color:#fff;"><span class="st" style="font-size:11.5px;margin-right:-0.8px">★</span>抄底</div>
<div class="t" style="left:300.6px;top:411.2px;color:#fff;"><span class="st" style="font-size:11.5px;margin-right:-0.8px">★</span>加仓</div>
<div class="t" style="left:360.9px;top:407.1px;color:#fff;"><span class="st" style="font-size:11.5px;margin-right:-0.8px">★</span>加仓</div>
<div class="t" style="left:464.1px;top:409px;color:#fff;"><span class="st" style="font-size:11.5px;margin-right:-0.8px">★</span>加仓</div>
<div class="t" style="left:493.7px;top:374px;color:#fff;"><span class="st" style="font-size:11.5px;margin-right:-0.8px">★</span>加仓</div>
<div class="t" style="left:508.8px;top:354.3px;color:#ffff00;"><span class="st" style="font-size:11.5px;margin-right:-0.8px">★</span>爆发<span style="margin-left:4.5px">！</span></div>
<div class="t" style="left:568.2px;top:355px;color:#fff;"><span class="st" style="font-size:11.5px;margin-right:-0.8px">★</span>空仓</div>
<div class="t" style="left:701.7px;top:405px;color:#fff;"><span class="st" style="font-size:11.5px;margin-right:-0.8px">★</span>加仓</div>
<div class="t" style="left:716.6px;top:382.2px;color:#fff;"><span class="st" style="font-size:11.5px;margin-right:-0.8px">★</span>加仓</div>
<div class="t" style="left:746px;top:349.6px;color:#ffff00;"><span class="st" style="font-size:11.5px;margin-right:-0.8px">★</span>爆发<span style="margin-left:4.5px">！</span></div>
<div class="t" style="left:775.6px;top:355px;color:#fff;"><span class="st" style="font-size:11.5px;margin-right:-0.8px">★</span>空仓</div>
<div class="t" style="left:834.5px;top:375px;color:#fff;"><span class="st" style="font-size:11.5px;margin-right:-0.8px">★</span>加仓</div>
<div class="t" style="left:864.7px;top:356.2px;color:#ffff00;"><span class="st" style="font-size:11.5px;margin-right:-0.8px">★</span>爆发<span style="margin-left:4.5px">！</span></div>
<div class="t" style="left:894px;top:475px;width:152px;text-align:center;font-size:21.3px;line-height:26px;font-weight:bold;color:#dc1e3c;padding-left:0px">好公式网</div>
<div class="t" style="left:894px;top:499.3px;width:172px;text-align:center;font-size:13px;letter-spacing:0.75px;line-height:18px;font-weight:bold;color:#3b3bb4">www.goodgongshi.com</div>
</body></html>
